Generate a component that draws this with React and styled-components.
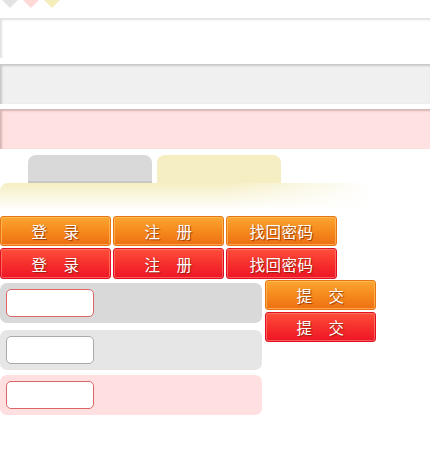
import React from 'react';
import styled, { createGlobalStyle, css } from 'styled-components';

const Global = createGlobalStyle`
  html, body { margin: 0; padding: 0; background: #fff; }
  body { font-family: "Liberation Sans", "Noto Sans CJK SC", sans-serif; }
`;

const Page = styled.div`
  width: 430px;
  display: flex;
  flex-direction: column;
`;

const Markers = styled.div`
  display: flex;
  gap: 5px;
  padding-left: 2px;
  height: 8px;
`;

const Marker = styled.span`
  width: 0;
  height: 0;
  border-left: 8px solid transparent;
  border-right: 8px solid transparent;
  border-top: 8px solid ${p => p.color};
`;

const Bars = styled.div`
  display: flex;
  flex-direction: column;
  margin-top: 10px;
`;

const Bar = styled.div`
  height: 40px;
  margin-top: ${p => p.gap || 0}px;
  background: ${p => p.bg};
  box-shadow: inset 0 3px 2px -1px ${p => p.edge}, inset 3px 0 2px -1px ${p => p.edge};
`;

const Tabs = styled.div`
  display: flex;
  gap: 5px;
  margin-top: 6px;
  padding-left: 28px;
`;

const Tab = styled.div`
  width: 124px;
  height: 28px;
  border-radius: 8px 8px 0 0;
  background: ${p => p.bg};
  box-shadow: ${p => (p.line ? `inset 0 -2px 0 ${p.line}` : 'none')};
`;

const Fade = styled.div`
  width: 374px;
  height: 28px;
  border-radius: 8px 0 0 0;
  background:
    linear-gradient(to right, rgba(255,255,255,0) 60%, #fff 100%),
    linear-gradient(to bottom, #f5eec2 0%, #faf6df 45%, #fff 100%);
`;

const ButtonGrid = styled.div`
  display: grid;
  grid-template-columns: repeat(3, 111px);
  gap: 2px;
  margin-top: 5px;
`;

const orange = css`
  background: linear-gradient(to bottom, #fca630 0%, #f58a1d 50%, #ee6f12 100%);
  border: 1px solid #e8730f;
  box-shadow: inset 0 0 0 1px rgba(255, 200, 120, 0.6);
`;

const red = css`
  background: linear-gradient(to bottom, #ff4f3b 0%, #f6302c 50%, #ee1526 100%);
  border: 1px solid #e2101e;
  box-shadow: inset 0 0 0 1px rgba(255, 140, 130, 0.6);
`;

const Btn = styled.button`
  box-sizing: border-box;
  width: 111px;
  height: ${p => p.h || 31}px;
  padding: 0;
  border-radius: 3px;
  color: #fff;
  font-family: "Noto Sans CJK SC", sans-serif;
  font-size: 15.5px;
  font-weight: 400;
  letter-spacing: 0.5px;
  white-space: pre;
  text-shadow: 1px 1px 1px rgba(110, 30, 0, 0.7);
  ${p => (p.tone === 'red' ? red : orange)};
`;

const Lower = styled.div`
  display: flex;
  gap: 3px;
  margin-top: 1px;
`;

const Panels = styled.div`
  display: flex;
  flex-direction: column;
  width: 262px;
  padding-top: 3px;
`;

const Panel = styled.div`
  height: 40px;
  margin-top: ${p => p.gap || 0}px;
  border-radius: 7px;
  background: ${p => p.bg};
  display: flex;
  align-items: center;
  padding-left: 6px;
`;

const Field = styled.input`
  box-sizing: border-box;
  width: 88px;
  height: 28px;
  border: 1px solid ${p => p.line};
  border-radius: 5px;
  background: #fff;
  outline: none;
`;

const Submits = styled.div`
  display: flex;
  flex-direction: column;
  gap: 2px;
`;

const labels = ['登　录', '注　册', '找回密码'];

export default function App() {
  return (
    <Page>
      <Global />
      <Markers>
        <Marker color="#e3e3e3" />
        <Marker color="#ffd8d8" />
        <Marker color="#f5eebb" />
      </Markers>
      <Bars>
        <Bar bg="#ffffff" edge="#e2e2e2" />
        <Bar gap={6} bg="#f0f0f0" edge="#c9c9c9" />
        <Bar gap={5} bg="#ffe1e1" edge="#d8b6b6" />
      </Bars>
      <Tabs>
        <Tab bg="#d9d9d9" line="#c8c8c8" />
        <Tab bg="#f5eec2" />
      </Tabs>
      <Fade />
      <ButtonGrid>
        {labels.map(l => <Btn key={'o' + l} h={30}>{l}</Btn>)}
        {labels.map(l => <Btn key={'r' + l} tone="red">{l}</Btn>)}
      </ButtonGrid>
      <Lower>
        <Panels>
          <Panel bg="#d9d9d9"><Field line="#dd6666" /></Panel>
          <Panel gap={7} bg="#e6e6e6"><Field line="#aaaaaa" /></Panel>
          <Panel gap={5} bg="#ffdfdf"><Field line="#dd6666" /></Panel>
        </Panels>
        <Submits>
          <Btn h={30}>提　交</Btn>
          <Btn tone="red" h={30}>提　交</Btn>
        </Submits>
      </Lower>
    </Page>
  );
}
